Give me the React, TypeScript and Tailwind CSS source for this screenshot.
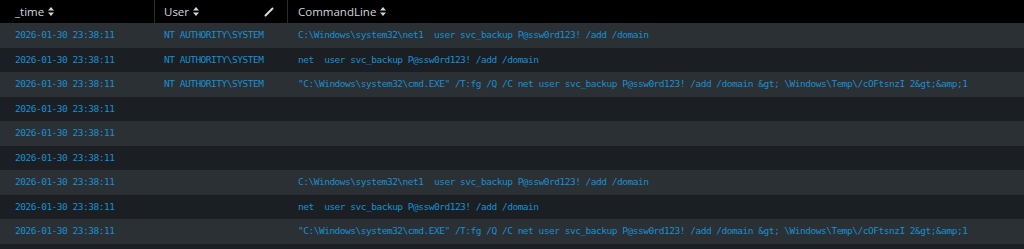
import React from "react";

const TIME = "2026-01-30 23:38:11";
const USER = "NT AUTHORITY\\SYSTEM";
const CMD_NET1 = "C:\\Windows\\system32\\net1  user svc_backup P@ssw0rd123! /add /domain";
const CMD_NET = "net  user svc_backup P@ssw0rd123! /add /domain";
const CMD_EXE =
  '"C:\\Windows\\system32\\cmd.EXE" /T:fg /Q /C net user svc_backup P@ssw0rd123! /add /domain &gt; \\Windows\\Temp\\/cOFtsnzI 2&gt;&amp;1';

const rows = [
  { user: USER, cmd: CMD_NET1 },
  { user: USER, cmd: CMD_NET },
  { user: USER, cmd: CMD_EXE },
  { user: "", cmd: "" },
  { user: "", cmd: "" },
  { user: "", cmd: "" },
  { user: "", cmd: CMD_NET1 },
  { user: "", cmd: CMD_NET },
  { user: "", cmd: CMD_EXE },
];

function SortIcon() {
  return (
    <svg width="6" height="9" viewBox="0 0 6 9" className="ml-[4px]">
      <path d="M3 0 L6 3.5 L0 3.5 Z" fill="#d0d6dc" />
      <path d="M3 9 L6 5.5 L0 5.5 Z" fill="#d0d6dc" />
    </svg>
  );
}

function Pencil() {
  return (
    <svg width="10" height="10" viewBox="0 0 10 10">
      <path d="M1.5 8.5 L8.5 1.5" stroke="#d6dbe0" strokeWidth="2" strokeLinecap="round" />
    </svg>
  );
}

export default function App() {
  const mono =
    "font-['DejaVu_Sans_Mono',monospace] text-[9.5px] tracking-[-0.49px] text-[#1a8fd0] whitespace-pre";
  return (
    <div className="w-[1024px] h-[249px] bg-[#1b1f23] overflow-hidden">
      {/* header */}
      <div className="flex h-[23px] bg-black font-['Open_Sans',sans-serif] text-[11.5px] text-[#d0d6dc]">
        <div className="w-[155px] flex items-center pl-[15px] border-r border-[#2c2c2c]">
          <span>_time</span>
          <SortIcon />
        </div>
        <div className="w-[133px] flex items-center pl-[9px] pr-[13px] border-r border-[#2c2c2c]">
          <span>User</span>
          <SortIcon />
          <div className="ml-auto flex items-center">
            <Pencil />
          </div>
        </div>
        <div className="flex-1 flex items-center pl-[10px]">
          <span>CommandLine</span>
          <SortIcon />
        </div>
      </div>

      {/* rows */}
      {rows.map((r, i) => (
        <div
          key={i}
          className={`flex h-[24.5px] items-center ${i % 2 === 0 ? "bg-[#2b3034]" : "bg-[#1b1f23]"}`}
        >
          <div className={`w-[155px] pl-[15px] ${mono}`}>{TIME}</div>
          <div className={`w-[133px] pl-[9px] ${mono}`}>{r.user}</div>
          <div className={`flex-1 pl-[10px] ${mono}`}>{r.cmd}</div>
        </div>
      ))}
    </div>
  );
}
